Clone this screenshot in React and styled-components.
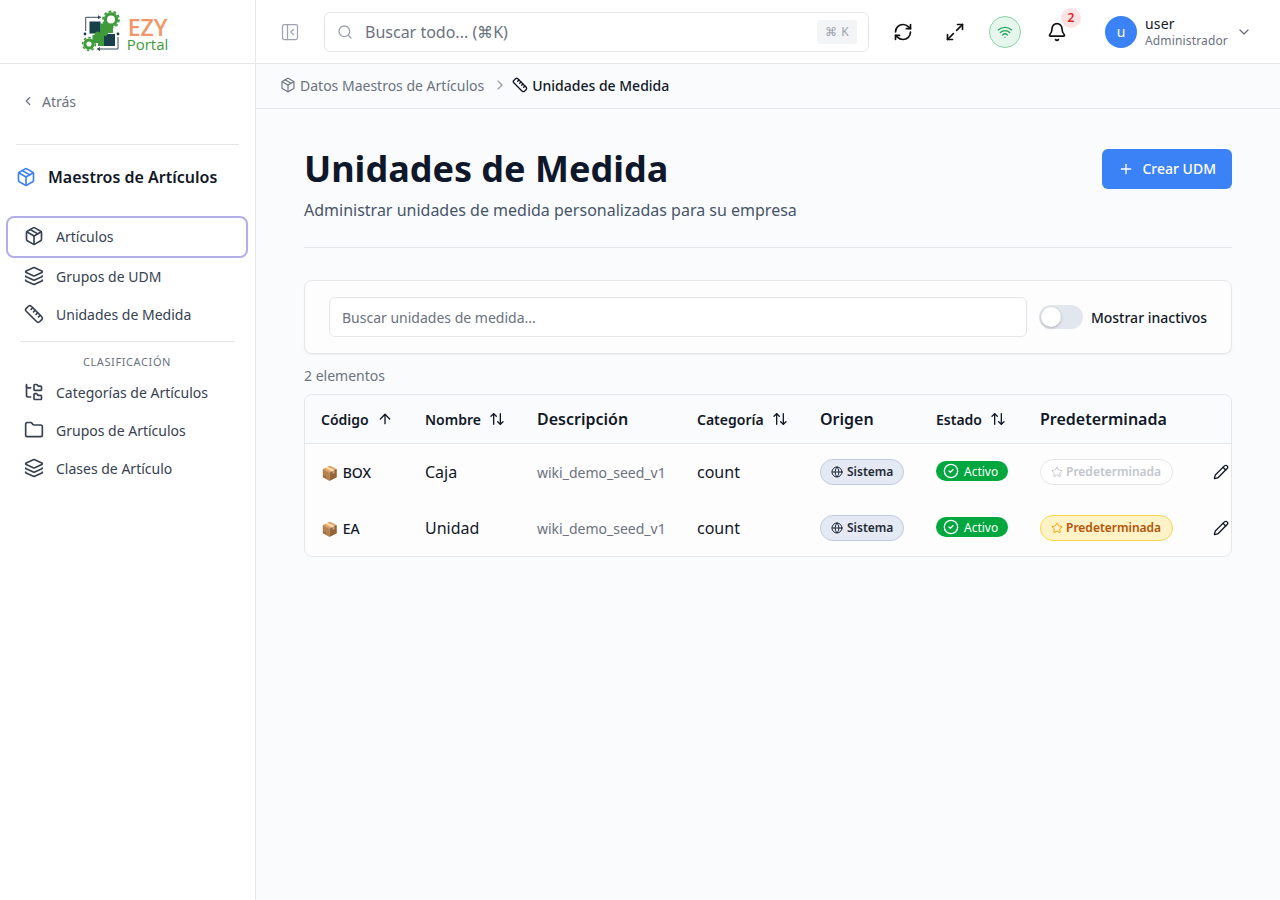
import React from "react";
import styled, { createGlobalStyle } from "styled-components";
import {
  ArrowUp,
  ArrowUpDown,
  Bell,
  ChevronDown,
  ChevronLeft,
  ChevronRight,
  CircleCheck,
  Folder,
  FolderTree,
  Globe,
  Layers,
  Maximize2,
  Package,
  PanelLeftClose,
  Pencil,
  Plus,
  RefreshCw,
  Ruler,
  Search,
  Star,
  Wifi,
} from "lucide-react";

const GlobalStyle = createGlobalStyle`
  html, body {
    margin: 0;
    padding: 0;
    height: 100%;
    background: #fff;
    font-family: "Noto Sans", "Open Sans", sans-serif;
    color: #111827;
  }
  * { box-sizing: border-box; }
`;

const Logo = () => (
  <LogoWrap>
    <svg width="48" height="44" viewBox="0 0 48 44">
      {/* arrows round the puzzle */}
      <path d="M6.7 21V7.3h13" fill="none" stroke="#3a4d5c" strokeWidth="1" />
      <path d="M19 5.3l3.5 2-3.5 2z" fill="#3a4d5c" />
      <path d="M39 27v12H20" fill="none" stroke="#3a4d5c" strokeWidth="1" />
      <path d="M21 37l-3.5 2 3.5 2z" fill="#3a4d5c" />
      {/* puzzle */}
      <rect x="10.5" y="11.5" width="11" height="12" fill="#17404a" />
      <rect x="24.5" y="24" width="11.5" height="12" fill="#17404a" />
      <path d="M21 13.5h4v-3h9v12.5h-5a3 3 0 0 1-6 0h-2z" fill="#3f9a3a" />
      <path d="M13.5 25h2a3 3 0 0 1 5.5-2h4v13h-6v-3h-5.5z" fill="#3f9a3a" />
      {/* gears */}
      <circle cx="32" cy="9.5" r="5.6" fill="#fff" stroke="#3f9a3a" strokeWidth="3.2" />
      <circle cx="32" cy="9.5" r="8" fill="none" stroke="#3f9a3a" strokeWidth="1.8" strokeDasharray="2.8 2.2" />
      <circle cx="10" cy="34" r="4.1" fill="#fff" stroke="#3f9a3a" strokeWidth="3" />
      <circle cx="10" cy="34" r="6.4" fill="none" stroke="#3f9a3a" strokeWidth="1.6" strokeDasharray="2.4 2.4" />
      <circle cx="6" cy="24" r="1.4" fill="#17404a" />
      <circle cx="39" cy="24" r="1.4" fill="#17404a" />
    </svg>
    <LogoText>
      <LogoEzy>EZY</LogoEzy>
      <LogoPortal>Portal</LogoPortal>
    </LogoText>
  </LogoWrap>
);

const rows = [
  { code: "BOX", name: "Caja", isDefault: false },
  { code: "EA", name: "Unidad", isDefault: true },
];

const App = () => {
  return (
    <>
      <GlobalStyle />
      <Page>
        <Sidebar>
          <SideTop>
            <Logo />
          </SideTop>
          <Back>
            <ChevronLeft size={14} />
            Atrás
          </Back>
          <SideRule />
          <SideTitle>
            <Package size={20} color="#3b82f6" />
            Maestros de Artículos
          </SideTitle>
          <Nav>
            <NavItem $focused>
              <Package size={20} />
              Artículos
            </NavItem>
            <NavItem>
              <Layers size={20} />
              Grupos de UDM
            </NavItem>
            <NavItem>
              <Ruler size={20} />
              Unidades de Medida
            </NavItem>
            <NavRule />
            <NavLabel>CLASIFICACIÓN</NavLabel>
            <NavItem>
              <FolderTree size={20} />
              Categorías de Artículos
            </NavItem>
            <NavItem>
              <Folder size={20} />
              Grupos de Artículos
            </NavItem>
            <NavItem>
              <Layers size={20} />
              Clases de Artículo
            </NavItem>
          </Nav>
        </Sidebar>
        <Column>
          <Topbar>
            <Collapse>
              <PanelLeftClose size={20} strokeWidth={1.5} />
            </Collapse>
            <GlobalSearch>
              <Search size={16} color="#9ca3af" />
              <GlobalPlaceholder>Buscar todo... (⌘K)</GlobalPlaceholder>
              <Kbd>⌘ K</Kbd>
            </GlobalSearch>
            <TopIcon>
              <RefreshCw size={20} />
            </TopIcon>
            <TopIcon $wide>
              <Maximize2 size={20} />
            </TopIcon>
            <WifiBadge>
              <Wifi size={16} />
            </WifiBadge>
            <BellWrap>
              <Bell size={20} />
              <BellCount>2</BellCount>
            </BellWrap>
            <UserMenu>
              <Avatar>u</Avatar>
              <UserText>
                <UserName>user</UserName>
                <UserRole>Administrador</UserRole>
              </UserText>
              <ChevronDown size={16} color="#6b7280" />
            </UserMenu>
          </Topbar>
          <Breadcrumb>
            <Package size={16} strokeWidth={1.75} />
            <CrumbLink>Datos Maestros de Artículos</CrumbLink>
            <CrumbSep>
              <ChevronRight size={16} />
            </CrumbSep>
            <Ruler size={16} color="#111827" />
            <CrumbCurrent>Unidades de Medida</CrumbCurrent>
          </Breadcrumb>
          <Main>
            <PageHead>
              <div>
                <Title>Unidades de Medida</Title>
                <Subtitle>Administrar unidades de medida personalizadas para su empresa</Subtitle>
              </div>
              <PrimaryButton>
                <Plus size={16} />
                Crear UDM
              </PrimaryButton>
            </PageHead>
            <FilterCard>
              <FilterInput>Buscar unidades de medida...</FilterInput>
              <Toggle>
                <Knob />
              </Toggle>
              <ToggleLabel>Mostrar inactivos</ToggleLabel>
            </FilterCard>
            <Count>2 elementos</Count>
            <TableCard>
              <Table>
                <thead>
                  <tr>
                    <Th $w={104} $sort>
                      <SortHead>
                        Código <ArrowUp size={16} />
                      </SortHead>
                    </Th>
                    <Th $w={112} $sort>
                      <SortHead>
                        Nombre <ArrowUpDown size={16} />
                      </SortHead>
                    </Th>
                    <Th $w={160}>Descripción</Th>
                    <Th $w={123} $sort>
                      <SortHead>
                        Categoría <ArrowUpDown size={16} />
                      </SortHead>
                    </Th>
                    <Th $w={116}>Origen</Th>
                    <Th $w={104} $sort>
                      <SortHead>
                        Estado <ArrowUpDown size={16} />
                      </SortHead>
                    </Th>
                    <Th $w={168}>Predeterminada</Th>
                    <Th />
                  </tr>
                </thead>
                <tbody>
                  {rows.map((row) => (
                    <tr key={row.code}>
                      <CodeCell>📦 {row.code}</CodeCell>
                      <Td>{row.name}</Td>
                      <DescCell>wiki_demo_seed_v1</DescCell>
                      <Td>count</Td>
                      <Td>
                        <OriginBadge>
                          <Globe size={12} />
                          Sistema
                        </OriginBadge>
                      </Td>
                      <Td>
                        <ActiveBadge>
                          <CircleCheck size={16} />
                          Activo
                        </ActiveBadge>
                      </Td>
                      <Td>
                        <DefaultBadge $on={row.isDefault}>
                          <Star size={12} />
                          Predeterminada
                        </DefaultBadge>
                      </Td>
                      <EditCell>
                        <Pencil size={16} />
                      </EditCell>
                    </tr>
                  ))}
                </tbody>
              </Table>
            </TableCard>
          </Main>
        </Column>
      </Page>
    </>
  );
};

const Page = styled.div`
  display: flex;
  width: 1280px;
  height: 900px;
  overflow: hidden;
`;

const Sidebar = styled.aside`
  width: 256px;
  flex: none;
  background: #fff;
  border-right: 1px solid #e5e7eb;
`;

const SideTop = styled.div`
  height: 64px;
  border-bottom: 1px solid #e5e7eb;
  display: flex;
  align-items: center;
  justify-content: center;
`;

const LogoWrap = styled.div`
  display: flex;
  align-items: center;
  gap: 0;
  margin-right: 8px;
`;

const LogoText = styled.div`
  display: flex;
  flex-direction: column;
  margin-top: 8px;
`;

const LogoEzy = styled.span`
  font-family: "Open Sans", sans-serif;
  font-size: 23px;
  font-weight: 600;
  line-height: 18px;
  padding-left: 1px;
  color: #f0976a;
`;

const LogoPortal = styled.span`
  font-family: "Open Sans", sans-serif;
  font-size: 15px;
  line-height: 17px;
  color: #3f9a3a;
`;

const Back = styled.div`
  display: flex;
  align-items: center;
  gap: 7px;
  margin: 27px 0 0 21px;
  height: 20px;
  font-size: 14px;
  color: #6b7280;
`;

const SideRule = styled.div`
  height: 1px;
  margin: 33px 16px 0;
  background: #e5e7eb;
`;

const SideTitle = styled.div`
  display: flex;
  align-items: center;
  gap: 12px;
  margin: 20px 0 0 16px;
  height: 24px;
  font-size: 16px;
  font-weight: 600;
  color: #111827;
`;

const Nav = styled.nav`
  margin: 27px 7px 0 6px;
  display: flex;
  flex-direction: column;
`;

const NavItem = styled.div`
  display: flex;
  align-items: center;
  gap: 12px;
  height: ${(p) => (p.$focused ? "42px" : "38px")};
  margin-bottom: ${(p) => (p.$focused ? "-1px" : "0")};
  padding: ${(p) => (p.$focused ? "0 0 2px 16px" : "0 0 0 18px")};
  border: ${(p) => (p.$focused ? "2px solid #b4aee8" : "none")};
  border-radius: 8px;
  font-size: 14px;
  color: #374151;
  svg {
    color: #374151;
    flex: none;
  }
`;

const NavRule = styled.div`
  height: 1px;
  margin: 8px 13px 0 14px;
  background: #e5e7eb;
`;

const NavLabel = styled.div`
  margin: 12px 0 3px;
  height: 16px;
  line-height: 16px;
  text-align: center;
  font-size: 11px;
  letter-spacing: 0.6px;
  color: #6b7280;
`;

const Column = styled.div`
  flex: 1;
  min-width: 0;
  display: flex;
  flex-direction: column;
  background: #fafbfd;
`;

const Topbar = styled.header`
  height: 64px;
  flex: none;
  display: flex;
  align-items: center;
  background: #fff;
  border-bottom: 1px solid #e5e7eb;
  padding-left: 24px;
`;

const Collapse = styled.div`
  display: flex;
  width: 20px;
  color: #9ca3af;
`;

const GlobalSearch = styled.div`
  display: flex;
  align-items: center;
  width: 545px;
  height: 40px;
  margin-left: 24px;
  padding: 0 11px 0 12px;
  background: #fff;
  border: 1px solid #e5e7eb;
  border-radius: 6px;
`;

const GlobalPlaceholder = styled.span`
  flex: 1;
  margin-left: 12px;
  font-size: 16px;
  color: #6b7280;
`;

const Kbd = styled.span`
  padding: 0 8px;
  height: 24px;
  line-height: 24px;
  border-radius: 4px;
  background: #f3f4f6;
  font-size: 12px;
  letter-spacing: 0.4px;
  color: #9ca3af;
`;

const TopIcon = styled.div`
  display: flex;
  margin-left: ${(p) => (p.$wide ? "32px" : "24px")};
  color: #111;
  svg {
    display: block;
  }
`;

const WifiBadge = styled.div`
  display: flex;
  align-items: center;
  justify-content: center;
  width: 32px;
  height: 32px;
  margin-left: 24px;
  border-radius: 50%;
  background: #e6f6ec;
  border: 1px solid #86d6a6;
  color: #22a75e;
`;

const BellWrap = styled.div`
  position: relative;
  display: flex;
  margin-left: 26px;
  color: #111;
`;

const BellCount = styled.span`
  position: absolute;
  top: -14px;
  left: 14px;
  width: 20px;
  height: 20px;
  border-radius: 50%;
  background: #fde3e3;
  color: #dc2626;
  font-size: 12px;
  font-weight: 600;
  line-height: 20px;
  text-align: center;
`;

const UserMenu = styled.div`
  display: flex;
  align-items: center;
  margin-left: 38px;
`;

const Avatar = styled.div`
  width: 32px;
  height: 32px;
  border-radius: 50%;
  background: #3b82f6;
  color: #fff;
  font-size: 14px;
  line-height: 32px;
  text-align: center;
`;

const UserText = styled.div`
  display: flex;
  flex-direction: column;
  margin: 0 8px 0 8px;
`;

const UserName = styled.span`
  font-size: 14px;
  line-height: 18px;
  letter-spacing: 0.2px;
  color: #111827;
`;

const UserRole = styled.span`
  font-size: 12px;
  line-height: 16px;
  letter-spacing: 0.15px;
  color: #6b7280;
`;

const Breadcrumb = styled.div`
  display: flex;
  align-items: center;
  height: 45px;
  flex: none;
  padding: 0 0 2px 24px;
  border-bottom: 1px solid #e5e7eb;
  font-size: 14px;
  color: #6b7280;
`;

const CrumbLink = styled.span`
  margin-left: 4px;
`;

const CrumbSep = styled.span`
  display: flex;
  margin: 0 4px 0 8px;
  color: #9ca3af;
`;

const CrumbCurrent = styled.span`
  margin-left: 4px;
  font-weight: 500;
  color: #111827;
`;

const Main = styled.main`
  padding: 40px 48px 0;
`;

const PageHead = styled.div`
  display: flex;
  justify-content: space-between;
  align-items: flex-start;
  height: 99px;
  border-bottom: 1px solid #e5e7eb;
`;

const Title = styled.h1`
  margin: 0;
  font-size: 36px;
  line-height: 40px;
  font-weight: 700;
  color: #0f172a;
`;

const Subtitle = styled.p`
  margin: 9px 0 0;
  font-size: 16px;
  line-height: 24px;
  color: #475569;
`;

const PrimaryButton = styled.button`
  display: flex;
  align-items: center;
  gap: 8px;
  height: 40px;
  padding: 0 16px 1px;
  border: 0;
  border-radius: 6px;
  background: #3b82f6;
  color: #fff;
  font: 500 14px "Noto Sans", sans-serif;
`;

const FilterCard = styled.div`
  display: flex;
  align-items: center;
  height: 74px;
  margin-top: 32px;
  padding: 0 24px;
  background: #fdfdfe;
  border: 1px solid #e5e7eb;
  border-radius: 8px;
  box-shadow: 0 1px 2px rgba(0, 0, 0, 0.05);
`;

const FilterInput = styled.div`
  width: 698px;
  height: 40px;
  padding: 0 12px;
  line-height: 40px;
  background: #fff;
  border: 1px solid #e5e7eb;
  border-radius: 6px;
  font-size: 14px;
  color: #6b7280;
`;

const Toggle = styled.div`
  position: relative;
  width: 44px;
  height: 24px;
  margin-left: 12px;
  border-radius: 12px;
  background: #e2e6ee;
`;

const Knob = styled.span`
  position: absolute;
  top: 2px;
  left: 2px;
  width: 20px;
  height: 20px;
  border-radius: 50%;
  background: #fff;
  box-shadow: 0 1px 3px rgba(0, 0, 0, 0.25);
`;

const ToggleLabel = styled.span`
  margin-left: 8px;
  font-size: 14px;
  font-weight: 500;
  color: #111827;
`;

const Count = styled.div`
  margin: 12px 0 8px;
  height: 20px;
  line-height: 20px;
  font-size: 14px;
  color: #6b7280;
`;

const TableCard = styled.div`
  background: #fdfdfe;
  border: 1px solid #e5e7eb;
  border-radius: 8px;
  overflow: hidden;
`;

const Table = styled.table`
  width: 100%;
  table-layout: fixed;
  border-collapse: separate;
  border-spacing: 0;
`;

const Th = styled.th`
  width: ${(p) => (p.$w ? `${p.$w}px` : "auto")};
  height: 49px;
  padding: 0 0 0 16px;
  text-align: left;
  background: #fafbfd;
  border-bottom: 1px solid #e5e7eb;
  font-size: ${(p) => (p.$sort ? "14px" : "16px")};
  font-weight: 600;
  color: #111827;
`;

const SortHead = styled.span`
  display: flex;
  align-items: center;
  gap: 8px;
`;

const Td = styled.td`
  height: 56px;
  padding: 0 0 0 16px;
  font-size: 16px;
  color: #111827;
`;

const CodeCell = styled(Td)`
  font-size: 14px;
  font-weight: 500;
  word-spacing: 1px;
`;

const DescCell = styled(Td)`
  font-size: 14px;
  color: #6b7280;
`;

const EditCell = styled(Td)`
  padding-left: 21px;
  svg {
    display: block;
  }
`;

const Badge = styled.span`
  display: inline-flex;
  align-items: center;
  vertical-align: middle;
  border-radius: 999px;
  font-size: 12px;
  font-weight: 600;
`;

const OriginBadge = styled(Badge)`
  gap: 4px;
  height: 26px;
  padding: 0 10px 2px;
  background: #e5e9f4;
  border: 1px solid #c5cadf;
  color: #1f2937;
  svg {
    position: relative;
    top: 1px;
  }
`;

const ActiveBadge = styled(Badge)`
  position: relative;
  top: -2px;
  gap: 5px;
  height: 20px;
  padding: 0 10px 0 7px;
  background: #00a63e;
  color: #fff;
  font-weight: 400;
`;

const DefaultBadge = styled(Badge)`
  gap: 3px;
  height: 26px;
  padding: 0 11px 2px 10px;
  background: ${(p) => (p.$on ? "#fef3c6" : "#fff")};
  border: 1px solid ${(p) => (p.$on ? "#fcd34d" : "#e5e7eb")};
  color: ${(p) => (p.$on ? "#b45309" : "#c2c6cc")};
  svg {
    position: relative;
    top: 1px;
    color: ${(p) => (p.$on ? "#f59e0b" : "#c2c6cc")};
  }
`;

export default App;
